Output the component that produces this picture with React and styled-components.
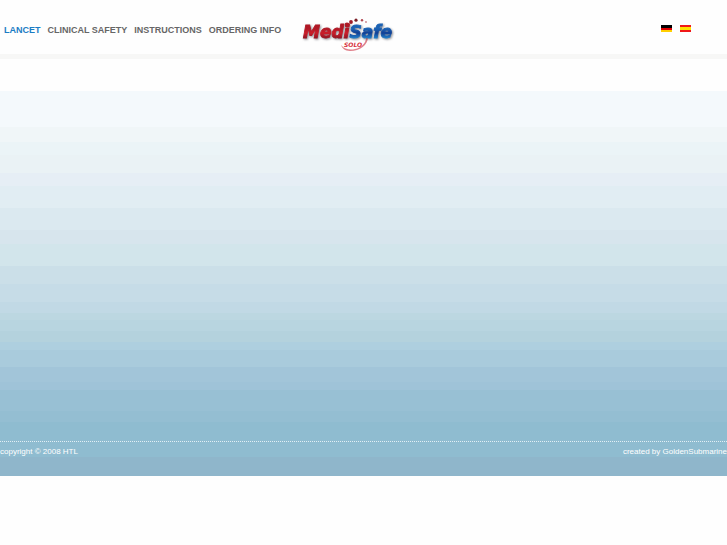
import styled, { createGlobalStyle } from "styled-components";

const GlobalStyle = createGlobalStyle`
  body {
    margin: 0;
    background: #fefefe;
    font-family: "Liberation Sans", Arial, Helvetica, sans-serif;
    font-size: 8px;
  }
`;

const Header = styled.header`
  display: flex;
  align-items: flex-start;
  height: 54px;
  border-bottom: 5px solid #f7f7f6;
`;

const Menu = styled.nav`
  display: flex;
  gap: 7px;
  padding: 24px 0 0 4px;
  font-size: 9px;
  line-height: 12px;
`;

const MenuLink = styled.a`
  color: ${(props) => (props.$active ? "#1b7cc4" : "#666")};
  font-weight: bold;
  text-decoration: none;
  white-space: nowrap;
`;

const LogoLink = styled.a`
  margin: 17px 0 0 21px;
  svg {
    display: block;
  }
`;

const Wordmark = styled.text`
  font-family: "DejaVu Sans", Verdana, sans-serif;
  font-size: 17px;
  font-weight: bold;
  font-style: italic;
  filter: drop-shadow(1px 1px 1px rgba(60, 60, 70, 0.6));
`;

const Variant = styled.text`
  font-family: "DejaVu Sans", Verdana, sans-serif;
  font-size: 6px;
  font-weight: bold;
  font-style: italic;
  fill: #d8323e;
`;

const Languages = styled.div`
  display: flex;
  gap: 8px;
  margin-left: auto;
  padding: 25px 36px 0 0;
  svg {
    display: block;
  }
`;

const Backdrop = styled.div`
  margin-top: 32px;
  background: linear-gradient(${(props) => props.$bands});
`;

const Content = styled.main`
  min-height: 350px;
`;

const Footer = styled.footer`
  display: flex;
  justify-content: space-between;
  height: 29px;
  padding-top: 5px;
  border-top: 1px dotted #e2eff5;
  line-height: 10px;
  color: #fff;
  a {
    color: #fff;
    text-decoration: none;
  }
`;

// [color, end of the band]
const bands = [
  ["#f4f9fc", 36],
  ["#f0f6f8", 51],
  ["#ebf4f7", 64],
  ["#eaf2f5", 82],
  ["#e6eef5", 95],
  ["#e1edf3", 117],
  ["#dbe9f0", 139],
  ["#d7e5ed", 153],
  ["#d2e5eb", 175],
  ["#cbdfe8", 193],
  ["#c6dce7", 211],
  ["#c1d9e5", 222],
  ["#bcd7e1", 229],
  ["#b8d5e0", 240],
  ["#b4d2dd", 251],
  ["#aecfdf", 259],
  ["#a9cbdc", 276],
  ["#a2c5d9", 291],
  ["#9fc3d8", 299],
  ["#98c0d4", 320],
  ["#94bed2", 331],
  ["#8fbcd0", 366],
  ["#8fb6cb", 385],
];

const bandStops = bands
  .map(([color, end], i) => `${color} ${i ? bands[i - 1][1] : 0}px ${end}px`)
  .join(", ");

const links = ["Lancet", "Clinical safety", "Instructions", "Ordering info"];

function Logo() {
  return (
    <svg width="94" height="36" viewBox="0 0 94 36" role="img" aria-label="MediSafe Solo">
      <defs>
        <linearGradient id="red" gradientUnits="userSpaceOnUse" x1="0" y1="9" x2="0" y2="23">
          <stop offset="0.2" stopColor="#b01825" />
          <stop offset="0.5" stopColor="#cc1e2a" />
          <stop offset="1" stopColor="#7c1220" />
        </linearGradient>
        <linearGradient id="blue" gradientUnits="userSpaceOnUse" x1="0" y1="9" x2="0" y2="23">
          <stop offset="0.2" stopColor="#1b62b4" />
          <stop offset="0.5" stopColor="#123f94" />
          <stop offset="1" stopColor="#2495dc" />
        </linearGradient>
      </defs>
      <path
        d="M66 20 C66 28 58 34 48 34 C43 34 40 31 39 28 C43 33 49 33 53 32 C59 31 64 26 64 21 Z"
        fill="#e0808a"
      />
      <circle cx="45" cy="8" r="2.4" fill="#b51d28" />
      <circle cx="49" cy="5" r="1.9" fill="#a01c28" />
      <circle cx="54" cy="3.2" r="1.6" fill="#7c2028" />
      <circle cx="60" cy="3.2" r="1.2" fill="#b04852" />
      <circle cx="64" cy="5" r="0.9" fill="#c98088" />
      <Wordmark x="1" y="21" strokeWidth="0.9">
        <tspan fill="url(#red)" stroke="url(#red)">Medi</tspan>
        <tspan fill="url(#blue)" stroke="url(#blue)">Safe</tspan>
      </Wordmark>
      <Variant x="42" y="30">SOLO</Variant>
    </svg>
  );
}

function Flag({ colors, heights }) {
  return (
    <svg width="11" height="7" viewBox="0 0 11 7" shapeRendering="crispEdges">
      {colors.map((color, i) => (
        <rect
          key={i}
          y={heights.slice(0, i).reduce((a, b) => a + b, 0)}
          width="11"
          height={heights[i]}
          fill={color}
        />
      ))}
    </svg>
  );
}

function App() {
  return (
    <>
      <GlobalStyle />
      <Header>
        <Menu>
          {links.map((link, index) => (
            <MenuLink key={link} href="#" $active={index === 0}>
              {link.toUpperCase()}
            </MenuLink>
          ))}
        </Menu>
        <LogoLink href="#">
          <Logo />
        </LogoLink>
        <Languages>
          <a href="#de" aria-label="Deutsch">
            <Flag colors={["#000", "#e00000", "#ffcf00"]} heights={[3, 2, 2]} />
          </a>
          <a href="#es" aria-label="Español">
            <Flag colors={["#f01818", "#ffe000", "#f01818"]} heights={[2, 3, 2]} />
          </a>
        </Languages>
      </Header>
      <Backdrop $bands={bandStops}>
        <Content />
        <Footer>
          <span>copyright © 2008 HTL</span>
          <span>
            created by <a href="#">GoldenSubmarine</a>
          </span>
        </Footer>
      </Backdrop>
    </>
  );
}

export default App;
